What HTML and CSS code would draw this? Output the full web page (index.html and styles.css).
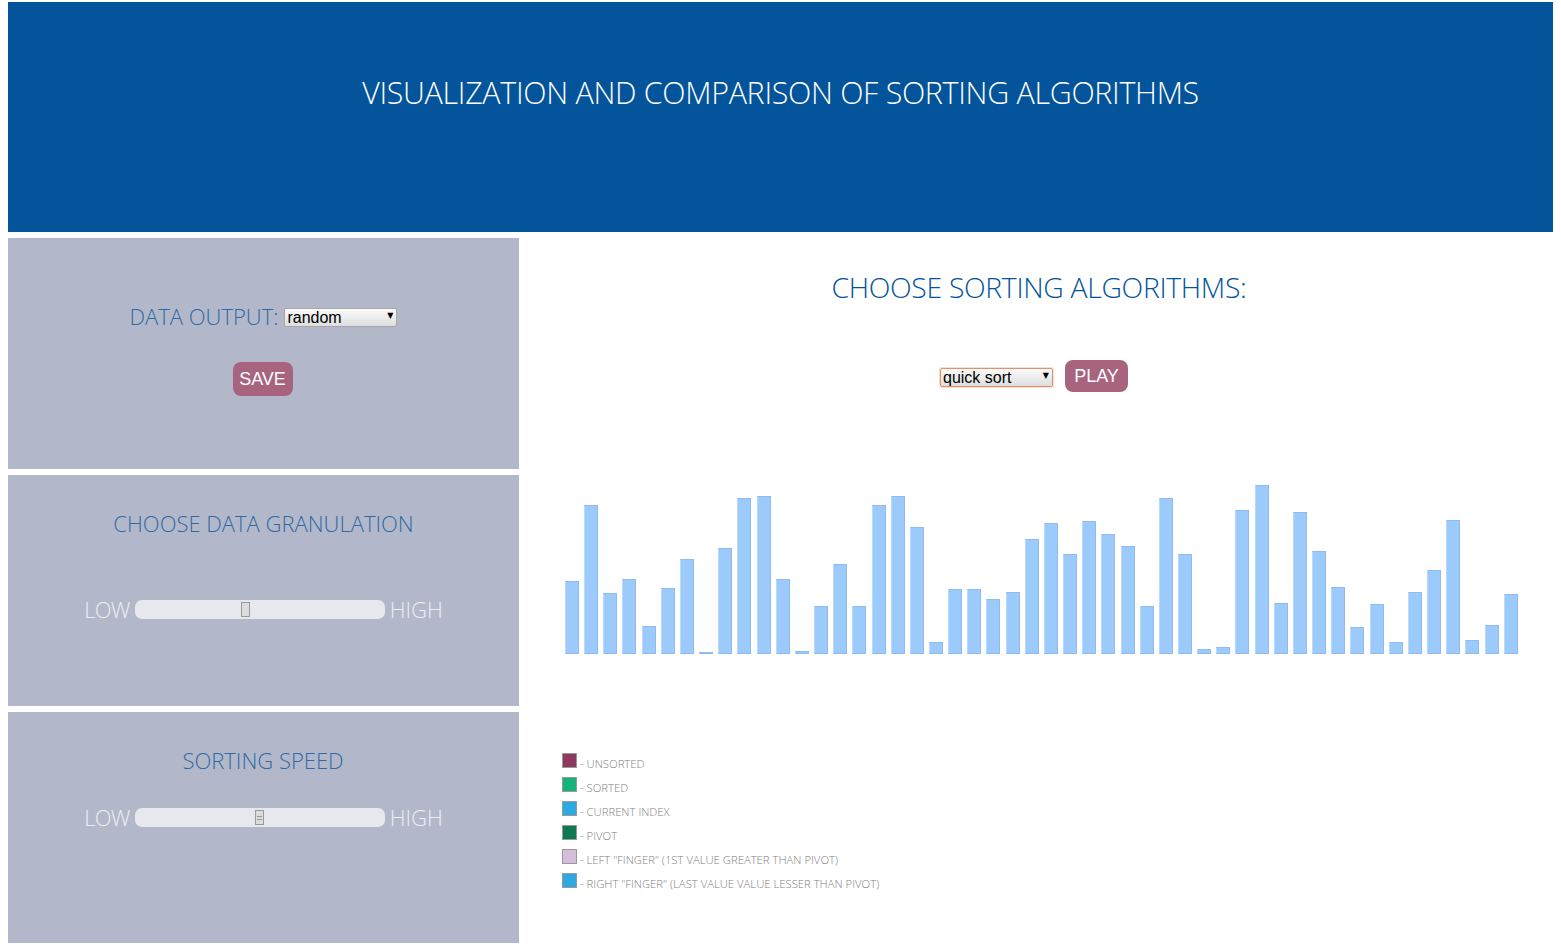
FILE: index.html
```html
<!DOCTYPE html>
<html lang="en">
<head>
<meta charset="utf-8">
<title>Sorting algorithms</title>
<link rel="stylesheet" href="styles.css">
</head>
<body>
<header class="header">
  <h1 class="header-title">VISUALIZATION AND COMPARISON OF SORTING ALGORITHMS</h1>
</header>
<main class="main">
  <aside class="sidebar">
    <section class="panel panel-output">
      <div class="output-row">
        <span class="panel-label">DATA OUTPUT:</span>
        <span class="select-wrap">
          <select class="select">
            <option>random</option>
            <option>sorted</option>
            <option>reversed</option>
          </select>
        </span>
      </div>
      <button class="btn btn-save">SAVE</button>
    </section>
    <section class="panel panel-granulation">
      <h3 class="panel-title">CHOOSE DATA GRANULATION</h3>
      <div class="slider-row">
        <span class="slider-label slider-label-low">LOW</span>
        <input class="slider" type="range" min="0" max="100" value="44">
        <span class="slider-label">HIGH</span>
      </div>
    </section>
    <section class="panel panel-speed">
      <h3 class="panel-title">SORTING SPEED</h3>
      <div class="slider-row">
        <span class="slider-label slider-label-low">LOW</span>
        <input class="slider slider-grip" type="range" min="0" max="100" value="50">
        <span class="slider-label">HIGH</span>
      </div>
    </section>
  </aside>
  <section class="content">
    <h2 class="content-title">CHOOSE SORTING ALGORITHMS:</h2>
    <div class="controls">
      <span class="select-wrap select-wrap-focus">
        <select class="select">
          <option>quick sort</option>
          <option>bubble sort</option>
          <option>merge sort</option>
        </select>
      </span>
      <button class="btn btn-play">PLAY</button>
    </div>
    <div class="chart">
      <div class="bar" style="height:73px"></div>
      <div class="bar" style="height:149px"></div>
      <div class="bar" style="height:61px"></div>
      <div class="bar" style="height:75px"></div>
      <div class="bar" style="height:28px"></div>
      <div class="bar" style="height:66px"></div>
      <div class="bar" style="height:95px"></div>
      <div class="bar" style="height:1px"></div>
      <div class="bar" style="height:106px"></div>
      <div class="bar" style="height:156px"></div>
      <div class="bar" style="height:158px"></div>
      <div class="bar" style="height:75px"></div>
      <div class="bar" style="height:3px"></div>
      <div class="bar" style="height:48px"></div>
      <div class="bar" style="height:90px"></div>
      <div class="bar" style="height:48px"></div>
      <div class="bar" style="height:149px"></div>
      <div class="bar" style="height:158px"></div>
      <div class="bar" style="height:127px"></div>
      <div class="bar" style="height:12px"></div>
      <div class="bar" style="height:65px"></div>
      <div class="bar" style="height:65px"></div>
      <div class="bar" style="height:55px"></div>
      <div class="bar" style="height:62px"></div>
      <div class="bar" style="height:115px"></div>
      <div class="bar" style="height:131px"></div>
      <div class="bar" style="height:100px"></div>
      <div class="bar" style="height:133px"></div>
      <div class="bar" style="height:120px"></div>
      <div class="bar" style="height:108px"></div>
      <div class="bar" style="height:48px"></div>
      <div class="bar" style="height:156px"></div>
      <div class="bar" style="height:100px"></div>
      <div class="bar" style="height:5px"></div>
      <div class="bar" style="height:7px"></div>
      <div class="bar" style="height:144px"></div>
      <div class="bar" style="height:169px"></div>
      <div class="bar" style="height:51px"></div>
      <div class="bar" style="height:142px"></div>
      <div class="bar" style="height:103px"></div>
      <div class="bar" style="height:67px"></div>
      <div class="bar" style="height:27px"></div>
      <div class="bar" style="height:50px"></div>
      <div class="bar" style="height:12px"></div>
      <div class="bar" style="height:62px"></div>
      <div class="bar" style="height:84px"></div>
      <div class="bar" style="height:134px"></div>
      <div class="bar" style="height:14px"></div>
      <div class="bar" style="height:29px"></div>
      <div class="bar" style="height:60px"></div>
    </div>
    <ul class="legend">
      <li class="legend-item"><span class="swatch swatch-unsorted"></span>- UNSORTED</li>
      <li class="legend-item"><span class="swatch swatch-sorted"></span>- SORTED</li>
      <li class="legend-item"><span class="swatch swatch-current"></span>- CURRENT INDEX</li>
      <li class="legend-item"><span class="swatch swatch-pivot"></span>- PIVOT</li>
      <li class="legend-item"><span class="swatch swatch-left"></span>- LEFT "FINGER" (1ST VALUE GREATER THAN PIVOT)</li>
      <li class="legend-item"><span class="swatch swatch-right"></span>- RIGHT "FINGER" (LAST VALUE VALUE LESSER THAN PIVOT)</li>
    </ul>
  </section>
</main>
</body>
</html>
```

FILE: styles.css
```css
html, body {
  background: #ffffff;
}
body {
  margin: 2px 8px 8px;
  font-family: "Open Sans", "Noto Sans", sans-serif;
}
.header {
  background: #03549a;
  height: 230px;
  display: flex;
  justify-content: center;
  align-items: flex-start;
}
.header-title {
  margin: 72px 0 0;
  color: #ffffff;
  font-weight: 300;
  font-size: 30.4px;
  line-height: 38px;
  letter-spacing: -0.3px;
}
.main {
  display: grid;
  grid-template-columns: 511px 1fr;
  margin-top: 6px;
}
.sidebar {
  display: flex;
  flex-direction: column;
  gap: 6px;
}
.panel {
  background: #b2b8c9;
  height: 231px;
  display: flex;
  flex-direction: column;
  align-items: center;
}
.output-row {
  display: flex;
  align-items: center;
  margin-top: 64px;
  gap: 6px;
}
.panel-label, .panel-title {
  color: #2f6aa6;
  font-weight: 300;
  font-size: 22px;
  line-height: 28px;
  letter-spacing: 0;
}
.panel-title {
  margin: 34px 0 0;
}
.panel-speed .panel-title {
  margin-left: -1px;
}
.select-wrap {
  position: relative;
  display: inline-block;
  margin-top: 3px;
}
.select-wrap::after {
  content: "\25BC";
  position: absolute;
  right: 4px;
  top: 3px;
  font-family: "DejaVu Sans", sans-serif;
  font-size: 8px;
  color: #000;
  pointer-events: none;
}
.select {
  -webkit-appearance: none;
  appearance: none;
  width: 113px;
  height: 19px;
  padding: 0 0 0 2px;
  margin: 0;
  border: 1px solid #a6a6a6;
  border-radius: 2px;
  background: linear-gradient(#fbfbfb, #dedede);
  font-family: "Liberation Sans", Arial, sans-serif;
  font-size: 16px;
  line-height: 17px;
  color: #000;
  display: block;
}
.select-wrap-focus .select {
  border-color: #e3916a;
  box-shadow: 0 0 0 1px rgba(229, 160, 120, 0.35);
}
.btn {
  border: none;
  background: #a8637f;
  color: #ffffff;
  font-family: "Liberation Sans", Arial, sans-serif;
  font-size: 18px;
  border-radius: 8px;
  padding: 0;
  cursor: pointer;
}
.btn-save {
  width: 60px;
  height: 34px;
  margin-top: 32px;
  margin-left: -2px;
}
.btn-play {
  width: 63px;
  height: 32px;
  margin-left: 12px;
}
.slider-row {
  display: flex;
  align-items: center;
  margin-top: 58px;
  gap: 5px;
}
.panel-speed .slider-row {
  margin-top: 29px;
}
.slider-label {
  color: #eceff6;
  font-weight: 300;
  font-size: 22px;
  line-height: 28px;
}
.slider-label-low {
  letter-spacing: -0.7px;
}
.slider {
  -webkit-appearance: none;
  appearance: none;
  width: 250px;
  height: 19px;
  margin: 0;
  border-radius: 7px;
  background: #e6e8ee;
  outline: none;
}
.slider::-webkit-slider-thumb {
  -webkit-appearance: none;
  appearance: none;
  width: 9px;
  height: 15px;
  background: #dcdcdc;
  border: 1px solid #9a9a9a;
  box-sizing: border-box;
}
.slider-grip::-webkit-slider-thumb {
  background: linear-gradient(#dcdcdc 0 5px, #9a9a9a 5px 6px, #dcdcdc 6px 8px, #9a9a9a 8px 9px, #dcdcdc 9px);
  background-size: 5px 100%;
  background-repeat: no-repeat;
  background-position: center;
  background-color: #dcdcdc;
}
.content {
  display: flex;
  flex-direction: column;
}
.content-title {
  margin: 30px 0 0;
  padding-left: 6px;
  text-align: center;
  color: #03549a;
  font-weight: 300;
  font-size: 28.3px;
  line-height: 38px;
  letter-spacing: -0.3px;
}
.controls {
  display: flex;
  justify-content: center;
  align-items: center;
  margin-top: 54px;
  padding-right: 4px;
}
.chart {
  display: flex;
  justify-content: space-between;
  align-items: flex-end;
  width: 953px;
  height: 180px;
  margin: 82px 0 0 46px;
}
.bar {
  width: 14px;
  box-sizing: border-box;
  background: #9ccbfb;
  border: 1px solid #8dbdf0;
  border-left-color: #b7d9fc;
}
.legend {
  list-style: none;
  margin: 97px 0 0 43px;
  padding: 0;
}
.legend-item {
  display: flex;
  align-items: center;
  height: 24px;
  color: #808080;
  font-family: "Open Sans", "Noto Sans", sans-serif;
  font-weight: 300;
  font-size: 11.3px;
  letter-spacing: 0;
}
.swatch {
  width: 15px;
  height: 15px;
  box-sizing: border-box;
  border: 1px solid #9a9a9a;
  margin-right: 3px;
  margin-top: -5px;
}
.swatch-unsorted { background: #8e3a5e; }
.swatch-sorted { background: #14b37a; }
.swatch-current { background: #2ea8e0; }
.swatch-pivot { background: #0f7a50; }
.swatch-left { background: #d4bedc; }
.swatch-right { background: #2ea8e0; }
```
